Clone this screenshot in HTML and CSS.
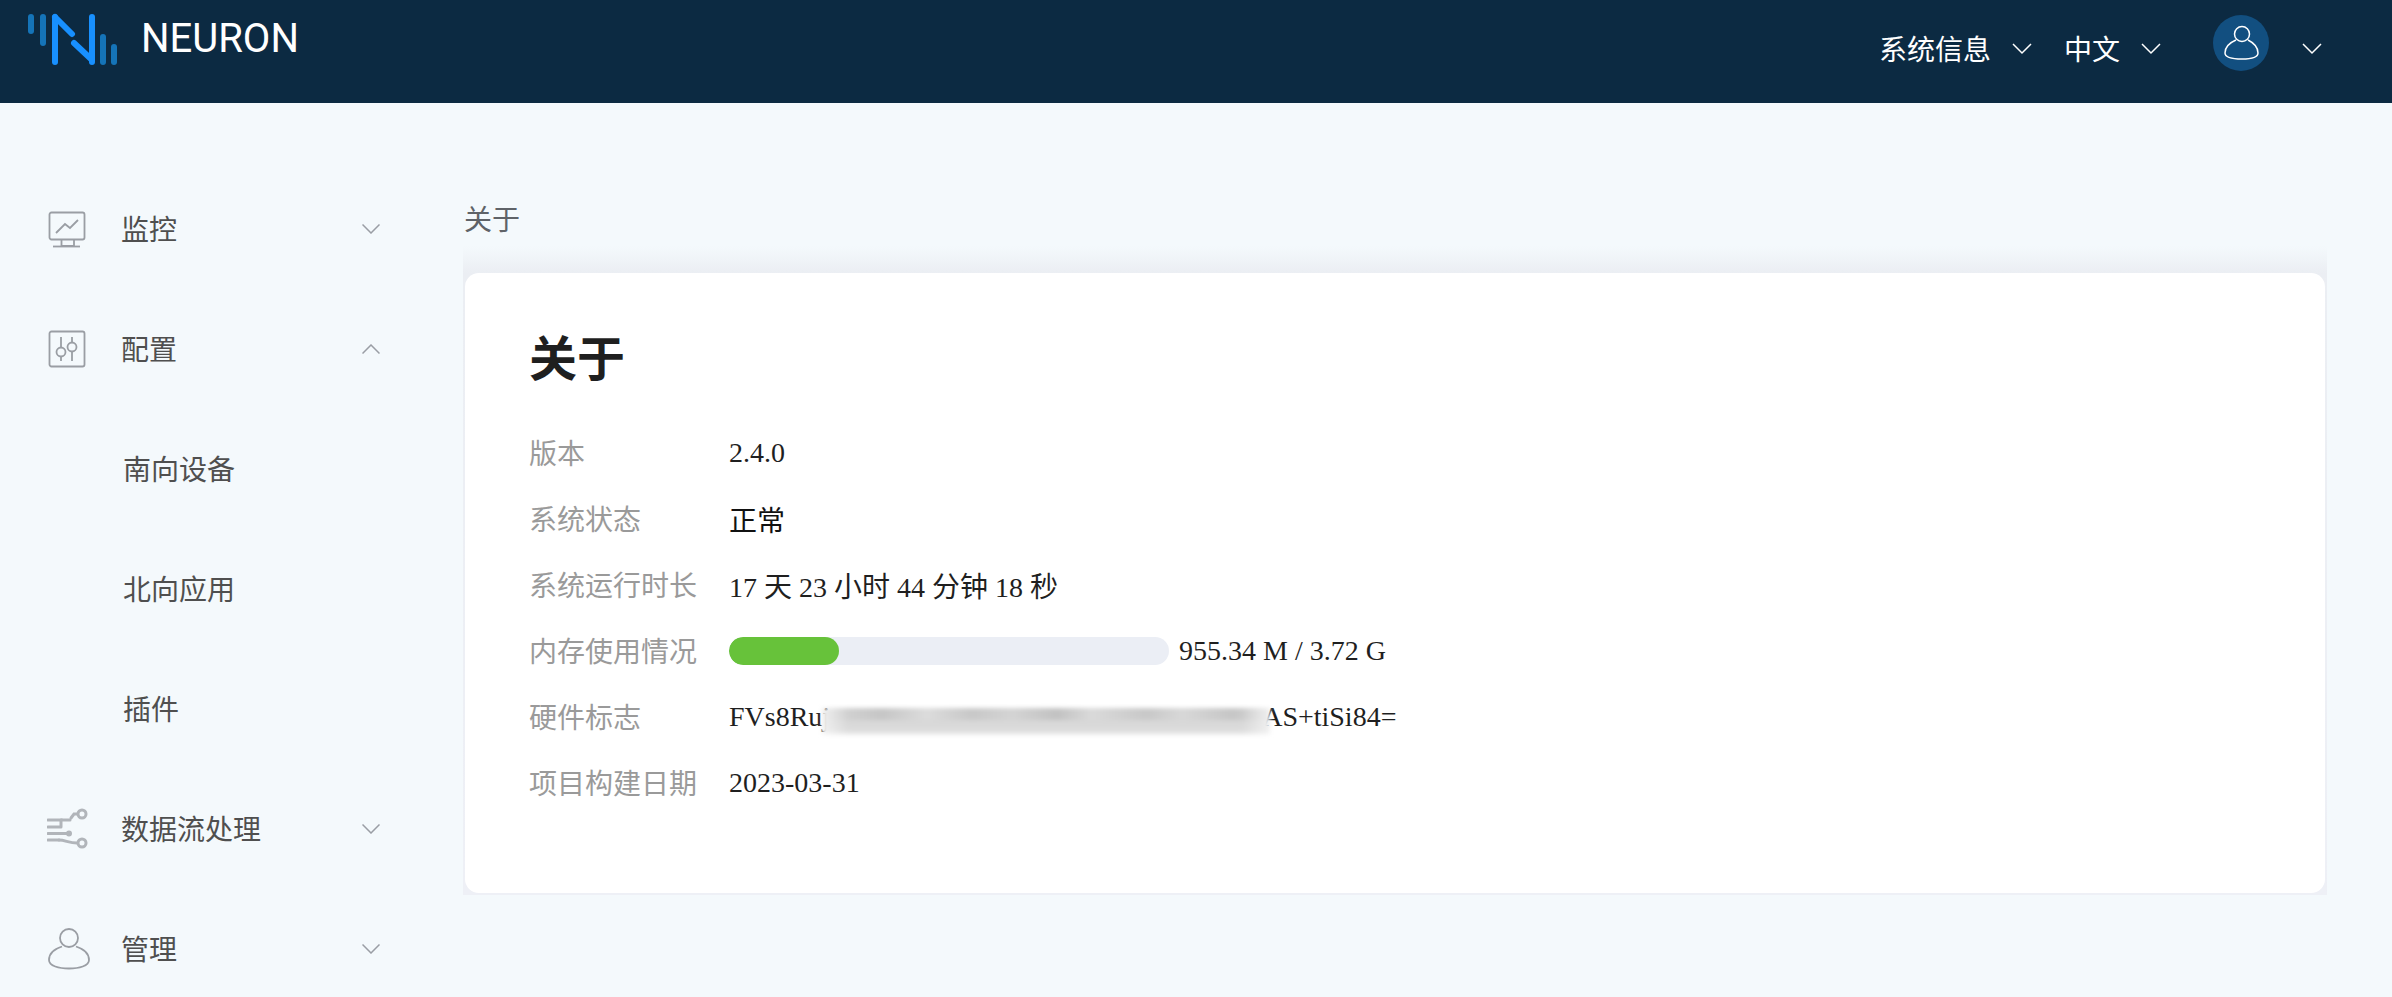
FILE: index.html
```html
<!DOCTYPE html>
<html>
  <head>
    <title>NEURON</title>
    <link rel="stylesheet" href="styles.css">
  </head>

  <body>
    <header class="topbar">
      <div class="brand">
        <svg class="logo" width="92" height="52" viewBox="0 0 92 52">
          <g fill="none" stroke-linecap="round" stroke-width="6">
            <path d="M3 4V18" stroke="#1574b8" />
            <path d="M15 4V30" stroke="#1574b8" />
            <path d="M27 4V49" stroke="#1890ff" />
            <path d="M27 4L44 21" stroke="#1890ff" />
            <path d="M46 30L63 46" stroke="#1890ff" />
            <path d="M64 4V49" stroke="#1890ff" />
            <path d="M75 24V49" stroke="#1574b8" />
            <path d="M86 34V49" stroke="#1574b8" />
          </g>
        </svg>
        <span class="brand-name">NEURON</span>
      </div>
      <nav class="top-nav">
        <div class="top-item">
          <span>系统信息</span>
          <svg class="chev" width="20" height="12" viewBox="0 0 20 12"><path d="M1 1L10 10L19 1" /></svg>
        </div>
        <div class="top-item">
          <span>中文</span>
          <svg class="chev" width="20" height="12" viewBox="0 0 20 12"><path d="M1 1L10 10L19 1" /></svg>
        </div>
        <div class="top-user">
          <div class="avatar">
            <svg width="36" height="36" viewBox="0 0 36 36" fill="none" stroke="#fff" stroke-width="1.5">
              <circle cx="19" cy="9" r="7.500" />
              <path d="M13 15C6 18 2 22 2 28C2 32 9 34 19 34C29 34 35 32 35 28C35 22 31 18 25 15" />
            </svg>
          </div>
          <svg class="chev" width="20" height="12" viewBox="0 0 20 12"><path d="M1 1L10 10L19 1" /></svg>
        </div>
      </nav>
    </header>

    <div class="layout">
      <aside class="sidebar">
        <div class="menu-item">
          <svg class="menu-icon" width="40" height="42" viewBox="0 0 40 42" fill="none" stroke="#9a9ea4" stroke-width="1.800">
            <rect x="2.500" y="5.500" width="35" height="27" rx="2" />
            <path d="M9 26L18 17L23 21L31 13" />
            <path d="M14.500 32.500V39H27V32.500" />
            <path d="M6 39.500H33" />
          </svg>
          <span class="menu-text">监控</span>
          <svg class="arrow" width="18" height="10" viewBox="0 0 18 10"><path d="M0.500 0.500L9 9L17.500 0.500" /></svg>
        </div>
        <div class="menu-item">
          <svg class="menu-icon" width="40" height="42" viewBox="0 0 40 42" fill="none" stroke="#9a9ea4" stroke-width="1.800">
            <rect x="2.500" y="4.500" width="35" height="35" rx="2" />
            <path d="M14 10V20M14 29V34M25 10V15M25 24V34" />
            <circle cx="14" cy="25" r="4.500" />
            <circle cx="25" cy="20" r="4.500" />
          </svg>
          <span class="menu-text">配置</span>
          <svg class="arrow" width="18" height="10" viewBox="0 0 18 10"><path d="M0.500 9.500L9 1L17.500 9.500" /></svg>
        </div>
        <div class="sub-item">南向设备</div>
        <div class="sub-item">北向应用</div>
        <div class="sub-item">插件</div>
        <div class="menu-item">
          <svg class="menu-icon" width="42" height="42" viewBox="0 0 42 42" fill="none" stroke="#b1b5ba" stroke-width="3" stroke-linecap="round">
            <circle cx="35" cy="7" r="4" />
            <circle cx="35" cy="36" r="4" />
            <path d="M1 13H14V20M1 20H14M1 26.500H20M1 33H12" />
            <path d="M14 13H23" />
            <path d="M24 11L27 7H30" />
            <path d="M12 33C18 33 22 36 30 36" />
            <circle cx="22" cy="26.500" r="1.500" fill="#b1b5ba" />
          </svg>
          <span class="menu-text">数据流处理</span>
          <svg class="arrow" width="18" height="10" viewBox="0 0 18 10"><path d="M0.500 0.500L9 9L17.500 0.500" /></svg>
        </div>
        <div class="menu-item">
          <svg class="menu-icon" width="44" height="44" viewBox="0 0 44 44" fill="none" stroke="#9a9ea4" stroke-width="1.800">
            <circle cx="22" cy="12" r="9" />
            <path d="M15 20.500C7 23 2 28 2 34C2 40 12 42.500 22 42.500C32 42.500 42 40 42 34C42 28 37 23 29 20.500" />
          </svg>
          <span class="menu-text">管理</span>
          <svg class="arrow" width="18" height="10" viewBox="0 0 18 10"><path d="M0.500 0.500L9 9L17.500 0.500" /></svg>
        </div>
      </aside>

      <main class="content">
        <div class="breadcrumb">关于</div>
        <div class="card-frame">
          <section class="card">
            <h1 class="card-title">关于</h1>
            <div class="info-row">
              <div class="info-label">版本</div>
              <div class="info-value">2.4.0</div>
            </div>
            <div class="info-row">
              <div class="info-label">系统状态</div>
              <div class="info-value status-ok">正常</div>
            </div>
            <div class="info-row">
              <div class="info-label">系统运行时长</div>
              <div class="info-value">17 天 23 小时 44 分钟 18 秒</div>
            </div>
            <div class="info-row">
              <div class="info-label">内存使用情况</div>
              <div class="info-value">
                <div class="progress"><div class="progress-fill"></div></div>
                <span>955.34 M / 3.72 G</span>
              </div>
            </div>
            <div class="info-row">
              <div class="info-label">硬件标志</div>
              <div class="info-value">FVs8Ruj<span class="masked"></span>AS+tiSi84=</div>
            </div>
            <div class="info-row">
              <div class="info-label">项目构建日期</div>
              <div class="info-value">2023-03-31</div>
            </div>
          </section>
        </div>
      </main>
    </div>
  </body>
</html>
```

FILE: styles.css
```css
* {
  box-sizing: border-box;
}

html,
body {
  height: 997px;
  margin: 0;
  overflow: hidden;
}

body {
  background-color: #f4f9fc;
  color: #1f1f1f;
  font-family: "Liberation Serif", "Noto Sans CJK SC", serif;
  font-size: 28px;
}

.topbar {
  display: flex;
  justify-content: space-between;
  height: 103px;
  padding: 0 70px 0 28px;
  background-color: #0c2a42;
  color: #fff;
}

.brand {
  display: flex;
  align-items: flex-start;
  gap: 21px;
  padding-top: 13px;
}

.brand-name {
  font-family: Roboto, sans-serif;
  font-size: 40px;
  line-height: 48px;
  margin-top: 2px;
}

.top-nav {
  display: flex;
  align-items: center;
  font-family: "Noto Sans CJK SC", sans-serif;
  padding-bottom: 8px;
}

.top-item {
  display: flex;
  align-items: center;
  gap: 21px;
  margin-right: 32px;
}

.top-user {
  display: flex;
  align-items: center;
  gap: 33px;
  margin-left: 20px;
}

.chev {
  fill: none;
  stroke: #fff;
  stroke-width: 1.5;
  margin-top: 2px;
}

.avatar {
  display: flex;
  align-items: center;
  justify-content: center;
  width: 56px;
  height: 56px;
  margin-bottom: 9px;
  border-radius: 50%;
  background-color: #124f80;
}

.layout {
  display: flex;
}

.sidebar {
  flex: 0 0 463px;
  padding-top: 65px;
  font-family: "Noto Sans CJK SC", sans-serif;
  color: #4f4f4f;
}

.menu-item {
  display: flex;
  align-items: center;
  height: 120px;
  padding-left: 47px;
}

.menu-icon {
  flex: 0 0 auto;
}

.menu-text {
  position: absolute;
  left: 121px;
}

.arrow {
  flex: 0 0 auto;
  position: absolute;
  left: 362px;
  margin-top: 2px;
  fill: none;
  stroke: #9a9ea4;
  stroke-width: 1.5;
}

.sub-item {
  display: flex;
  align-items: center;
  height: 120px;
  padding-left: 123px;
}

.content {
  flex: 0 0 1864px;
  padding-top: 95px;
}

.breadcrumb {
  height: 42px;
  padding-left: 1px;
  font-family: "Noto Sans CJK SC", sans-serif;
  color: #5f6368;
  line-height: 40px;
}

.card-frame {
  padding: 33px 2px 2px;
  background: linear-gradient(to bottom, rgba(235, 238, 243, 0) 6px, rgba(235, 238, 243, 0.35) 16px, rgba(235, 238, 243, 0.75) 26px, #ebeef3 33px, #eef0f6);
}

.card {
  height: 620px;
  padding: 51px 64px 0;
  background-color: #fff;
  border-radius: 14px;
}

.card-title {
  margin: 0 0 34px;
  font-family: "Noto Sans CJK SC", sans-serif;
  font-size: 48px;
  line-height: 62px;
  font-weight: 700;
  color: #1f1f1f;
}

.info-row {
  display: flex;
  align-items: center;
  height: 66px;
}

.info-label {
  flex: 0 0 200px;
  margin-bottom: 2px;
  font-family: "Noto Sans CJK SC", sans-serif;
  color: #9a9a9a;
}

.info-value {
  display: flex;
  align-items: center;
  white-space: pre;
  color: #1f1f1f;
}

.status-ok {
  font-family: "Noto Sans CJK SC", sans-serif;
  color: #111;
}

.progress {
  width: 440px;
  height: 28px;
  margin-right: 10px;
  border-radius: 14px;
  background-color: #ebeef5;
  overflow: hidden;
}

.progress-fill {
  width: 110px;
  height: 100%;
  border-radius: 14px;
  background-color: #67c23a;
}

/* blurred hardware id, sits over the ends of the real text */
.masked {
  display: inline-block;
  position: relative;
  width: 448px;
  height: 27px;
  margin: 9px -8px 0 -8px;
  background:
    linear-gradient(to right, rgba(255, 255, 255, 0.6), rgba(255, 255, 255, 0) 26px, rgba(255, 255, 255, 0) 420px, rgba(255, 255, 255, 0.6)),
    linear-gradient(to right, #d8d8d8, #c6c6c6 60px, #dcdcdc 105px, #c8c8c8 150px, #d4d4d4 190px, #c2c2c2 235px, #dadada 270px, #c8c8c8 325px, #d8d8d8 360px, #c6c6c6 410px, #d8d8d8) 0 0 / 100% 12px no-repeat,
    linear-gradient(to bottom, #d4d4d4, #d8d8d8 40%, #d8d8d8 55%, #dddddd 85%, #f0f0f0);
  filter: blur(2px);
}
```
